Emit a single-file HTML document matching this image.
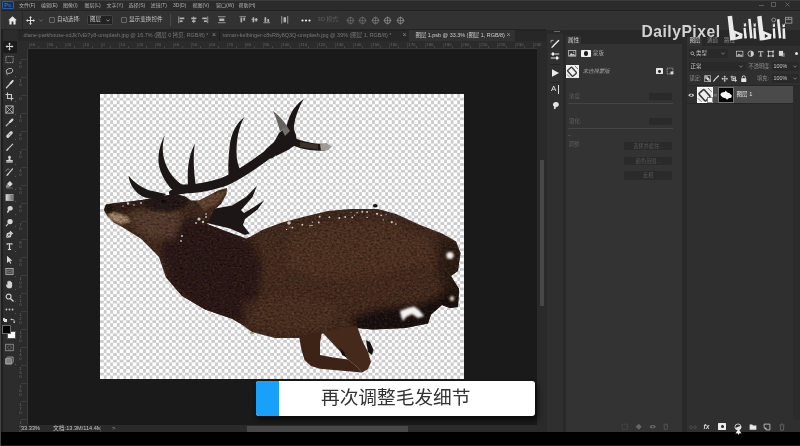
<!DOCTYPE html><html><head><meta charset="utf-8"><title>Photoshop</title><style>html,body{margin:0;padding:0;background:#1a1a1a;}body{width:800px;height:446px;position:relative;overflow:hidden;font-family:"Liberation Sans","Noto Sans CJK SC",sans-serif;}#wrap{position:absolute;left:-6px;top:-6px;width:812px;height:458px;background:#1a1a1a;filter:blur(0.5px);will-change:transform;}#in{position:absolute;left:6px;top:6px;width:800px;height:446px;}.t{display:block;white-space:nowrap;font-family:"Liberation Sans","Noto Sans CJK SC",sans-serif;}</style></head><body><div id="wrap"><div id="in"><div style="position:absolute;left:0px;top:0px;width:800px;height:446px;background:#1a1a1a;"></div><div style="position:absolute;left:0px;top:0px;width:800px;height:10px;background:#2b2b2b;"></div><div style="position:absolute;left:0px;top:0px;width:800px;height:1px;background:#3c3c3c;"></div><div style="position:absolute;left:0px;top:9.5px;width:800px;height:1.5px;background:#232323;"></div><div style="position:absolute;left:0px;top:11px;width:800px;height:19px;background:#323232;"></div><div style="position:absolute;left:0px;top:30px;width:546px;height:11px;background:#272727;"></div><div style="position:absolute;left:0px;top:29.4px;width:546px;height:1.3px;background:#232323;"></div><div style="position:absolute;left:409px;top:30px;width:105.5px;height:11px;background:#323232;"></div><div style="position:absolute;left:18px;top:41px;width:528px;height:7.5px;background:#2b2b2b;"></div><div style="position:absolute;left:18px;top:41px;width:9.5px;height:384px;background:#2b2b2b;"></div><div style="position:absolute;left:0px;top:30px;width:18px;height:402px;background:#2c2c2c;"></div><div style="position:absolute;left:1px;top:30px;width:1.6px;height:402px;background:#1f1f1f;"></div><div style="position:absolute;left:537px;top:48.5px;width:9px;height:377px;background:#2a2a2a;"></div><div style="position:absolute;left:539.8px;top:160px;width:4.6px;height:146px;background:#474747;"></div><div style="position:absolute;left:18px;top:425px;width:528px;height:7px;background:#2a2a2a;"></div><div style="position:absolute;left:246.5px;top:426.2px;width:161.5px;height:5.8px;background:#474747;"></div><div style="position:absolute;left:546px;top:30px;width:254px;height:402px;background:#292929;"></div><div style="position:absolute;left:546.5px;top:33.5px;width:16px;height:398.5px;background:#2f2f2f;"></div><div style="position:absolute;left:565.5px;top:30px;width:116px;height:402px;background:#333333;"></div><div style="position:absolute;left:565.5px;top:30px;width:116px;height:14px;background:#282828;"></div><div style="position:absolute;left:566px;top:36px;width:15px;height:8.5px;background:#333333;"></div><div style="position:absolute;left:686.5px;top:30px;width:113.5px;height:402px;background:#2f2f2f;"></div><div style="position:absolute;left:0px;top:432px;width:800px;height:14px;background:#000;"></div><div style="position:absolute;left:0px;top:445.2px;width:800px;height:0.8px;background:#1c1c1c;"></div><div style="position:absolute;left:0px;top:0px;width:1px;height:446px;background:#454545;"></div><div style="position:absolute;left:2px;top:0.6px;width:12px;height:8.4px;background:#12305c;border:0.9px solid #2b5c9c;box-sizing:border-box;border-radius:1px;"></div><div style="position:absolute;left:4.2px;top:1.9px;font-size:5.6px;line-height:6px;font-weight:bold;color:#3a6fae;">Ps</div><div style="position:absolute;left:19px;top:2.6px;line-height:0;color:#b0b0b0"><span class="t" style="font-size:5px;line-height:5px;">文件(F)</span></div><div style="position:absolute;left:41px;top:2.6px;line-height:0;color:#b0b0b0"><span class="t" style="font-size:5px;line-height:5px;">编辑(E)</span></div><div style="position:absolute;left:63px;top:2.6px;line-height:0;color:#b0b0b0"><span class="t" style="font-size:5px;line-height:5px;">图像(I)</span></div><div style="position:absolute;left:84.5px;top:2.6px;line-height:0;color:#b0b0b0"><span class="t" style="font-size:5px;line-height:5px;">图层(L)</span></div><div style="position:absolute;left:106.5px;top:2.6px;line-height:0;color:#b0b0b0"><span class="t" style="font-size:5px;line-height:5px;">文字(Y)</span></div><div style="position:absolute;left:128.5px;top:2.6px;line-height:0;color:#b0b0b0"><span class="t" style="font-size:5px;line-height:5px;">选择(S)</span></div><div style="position:absolute;left:150.5px;top:2.6px;line-height:0;color:#b0b0b0"><span class="t" style="font-size:5px;line-height:5px;">滤镜(T)</span></div><div style="position:absolute;left:173px;top:2.6px;line-height:0;color:#b0b0b0"><span class="t" style="font-size:5px;line-height:5px;">3D(D)</span></div><div style="position:absolute;left:192.5px;top:2.6px;line-height:0;color:#b0b0b0"><span class="t" style="font-size:5px;line-height:5px;">视图(V)</span></div><div style="position:absolute;left:216px;top:2.6px;line-height:0;color:#b0b0b0"><span class="t" style="font-size:5px;line-height:5px;">窗口(W)</span></div><div style="position:absolute;left:238.5px;top:2.6px;line-height:0;color:#b0b0b0"><span class="t" style="font-size:5px;line-height:5px;">帮助(H)</span></div><svg style="position:absolute;left:7.5px;top:15.5px" width="9" height="9" viewBox="0 0 9 9"><path fill="#e8e8e8" d="M4.5,0.3 L8.8,4.3 L7.6,4.3 L7.6,8.6 L5.4,8.6 L5.4,5.6 L3.6,5.6 L3.6,8.6 L1.4,8.6 L1.4,4.3 L0.2,4.3 Z"/></svg><div style="position:absolute;left:21.5px;top:12px;width:0.8px;height:17px;background:#262626;"></div><svg style="position:absolute;left:25.5px;top:15.5px" width="9" height="9" viewBox="0 0 9 9"><path fill="#dcdcdc" d="M4.5,0 L6,1.8 L5,1.8 L5,4 L7.2,4 L7.2,3 L9,4.5 L7.2,6 L7.2,5 L5,5 L5,7.2 L6,7.2 L4.5,9 L3,7.2 L4,7.2 L4,5 L1.8,5 L1.8,6 L0,4.5 L1.8,3 L1.8,4 L4,4 L4,1.8 L3,1.8 Z"/></svg><svg style="position:absolute;left:38.5px;top:19px" width="4" height="3" viewBox="0 0 4 3"><path fill="none" stroke="#777" stroke-width="0.8" d="M0.3,0.5 L2,2.3 L3.7,0.5"/></svg><div style="position:absolute;left:49px;top:17px;width:5.5px;height:5.5px;background:transparent;border:0.7px solid #6a6a6a;border-radius:1px;box-sizing:border-box;"></div><div style="position:absolute;left:57px;top:16.9px;line-height:0;color:#c4c4c4"><span class="t" style="font-size:5.5px;line-height:5.5px;">自动选择:</span></div><div style="position:absolute;left:87px;top:14.5px;width:25.5px;height:10.5px;background:#222;border:0.6px solid #444;border-radius:1.5px;box-sizing:border-box;"></div><div style="position:absolute;left:90px;top:16.9px;line-height:0;color:#d0d0d0"><span class="t" style="font-size:5.5px;line-height:5.5px;">图层</span></div><svg style="position:absolute;left:106px;top:18.5px" width="4" height="3" viewBox="0 0 4 3"><path fill="none" stroke="#aaa" stroke-width="0.8" d="M0.3,0.5 L2,2.3 L3.7,0.5"/></svg><div style="position:absolute;left:121px;top:17px;width:5.5px;height:5.5px;background:transparent;border:0.7px solid #6a6a6a;border-radius:1px;box-sizing:border-box;"></div><div style="position:absolute;left:129px;top:16.9px;line-height:0;color:#c4c4c4"><span class="t" style="font-size:5.6px;line-height:5.6px;">显示变换控件</span></div><div style="position:absolute;left:169.5px;top:14px;width:0.7px;height:12px;background:#484848;"></div><svg style="position:absolute;left:178.2px;top:16.3px" width="7.6" height="7.6" viewBox="0 0 9 9" fill="#b4b4b4"><rect x="0.5" y="0.5" width="0.9" height="8"/><rect x="2" y="1.8" width="5.5" height="2"/><rect x="2" y="5.2" width="3.5" height="2"/></svg><svg style="position:absolute;left:189.7px;top:16.3px" width="7.6" height="7.6" viewBox="0 0 9 9" fill="#b4b4b4"><rect x="4" y="0.5" width="0.9" height="8"/><rect x="1.5" y="1.8" width="6" height="2"/><rect x="2.5" y="5.2" width="4" height="2"/></svg><svg style="position:absolute;left:201.2px;top:16.3px" width="7.6" height="7.6" viewBox="0 0 9 9" fill="#b4b4b4"><rect x="7.6" y="0.5" width="0.9" height="8"/><rect x="1.5" y="1.8" width="5.5" height="2"/><rect x="3.5" y="5.2" width="3.5" height="2"/></svg><svg style="position:absolute;left:218.2px;top:16.3px" width="7.6" height="7.6" viewBox="0 0 9 9" fill="#b4b4b4"><rect x="0" y="0.5" width="9" height="0.9"/><rect x="0" y="7.6" width="9" height="0.9"/><rect x="1.5" y="3" width="6" height="3"/></svg><svg style="position:absolute;left:238.7px;top:16.3px" width="7.6" height="7.6" viewBox="0 0 9 9" fill="#b4b4b4"><rect x="0.5" y="0.5" width="8" height="0.9"/><rect x="1.8" y="2" width="2" height="5.5"/><rect x="5.2" y="2" width="2" height="3.5"/></svg><svg style="position:absolute;left:250.7px;top:16.3px" width="7.6" height="7.6" viewBox="0 0 9 9" fill="#b4b4b4"><rect x="0.5" y="4" width="8" height="0.9"/><rect x="1.8" y="1.5" width="2" height="6"/><rect x="5.2" y="2.5" width="2" height="4"/></svg><svg style="position:absolute;left:263.2px;top:16.3px" width="7.6" height="7.6" viewBox="0 0 9 9" fill="#b4b4b4"><rect x="0.5" y="7.6" width="8" height="0.9"/><rect x="1.8" y="1.5" width="2" height="5.5"/><rect x="5.2" y="3.5" width="2" height="3.5"/></svg><svg style="position:absolute;left:281.2px;top:16.3px" width="7.6" height="7.6" viewBox="0 0 9 9" fill="#b4b4b4"><rect x="0.5" y="0" width="0.9" height="9"/><rect x="7.6" y="0" width="0.9" height="9"/><rect x="3" y="1.5" width="3" height="6"/></svg><svg style="position:absolute;left:300.5px;top:18.5px" width="10" height="3" viewBox="0 0 10 3" fill="#f0f0f0"><circle cx="1.5" cy="1.5" r="1.1"/><circle cx="5" cy="1.5" r="1.1"/><circle cx="8.5" cy="1.5" r="1.1"/></svg><div style="position:absolute;left:317.5px;top:16.6px;line-height:0;color:#5e5e5e"><span class="t" style="font-size:5.8px;line-height:5.8px;">3D 模式:</span></div><svg style="position:absolute;left:345.5px;top:15.5px" width="9" height="9" viewBox="0 0 9 9" fill="none" stroke="#686868" stroke-width="1"><circle cx="4.5" cy="4.5" r="3"/><path d="M4.5,0.5 V8.5 M0.5,4.5 H8.5" stroke-width="0.7"/></svg><svg style="position:absolute;left:358px;top:15.5px" width="9" height="9" viewBox="0 0 9 9" fill="none" stroke="#686868" stroke-width="1"><circle cx="4.5" cy="4.5" r="3"/><path d="M4.5,0.5 V8.5 M0.5,4.5 H8.5" stroke-width="0.7"/></svg><svg style="position:absolute;left:370.5px;top:15.5px" width="9" height="9" viewBox="0 0 9 9" fill="none" stroke="#7a7a7a" stroke-width="1"><circle cx="4.5" cy="4.5" r="3"/><path d="M4.5,0.5 V8.5 M0.5,4.5 H8.5" stroke-width="0.7"/></svg><svg style="position:absolute;left:383px;top:15.5px" width="9" height="9" viewBox="0 0 9 9" fill="none" stroke="#8a8a8a" stroke-width="1"><circle cx="4.5" cy="4.5" r="3"/><path d="M4.5,0.5 V8.5 M0.5,4.5 H8.5" stroke-width="0.7"/></svg><svg style="position:absolute;left:395.5px;top:15.5px" width="9" height="9" viewBox="0 0 9 9" fill="none" stroke="#8a8a8a" stroke-width="1"><circle cx="4.5" cy="4.5" r="3"/><path d="M4.5,0.5 V8.5 M0.5,4.5 H8.5" stroke-width="0.7"/></svg><div style="position:absolute;left:23.5px;top:31.8px;font-size:5.45px;line-height:6.54px;color:#787878;white-space:nowrap;">diane-parkhouse-xdJk7vEi7y8-unsplash.jpg @ 16.7% (<span style="font-size:5.4px;">图层</span> 0 <span style="font-size:5.4px;">拷贝</span>, RGB/8) *</div><div style="position:absolute;left:212px;top:31.2px;font-size:7px;line-height:8.4px;color:#8a8a8a;white-space:nowrap;">×</div><div style="position:absolute;left:219.3px;top:31px;width:0.7px;height:10px;background:#1c1c1c;"></div><div style="position:absolute;left:222.5px;top:31.8px;font-size:5.45px;line-height:6.54px;color:#787878;white-space:nowrap;">roman-kelbinger-c8sR8y8Q3Q-unsplash.jpg @ 39% (<span style="font-size:5.4px;">图层</span> 1, RGB/8) *</div><div style="position:absolute;left:402.5px;top:31.2px;font-size:7px;line-height:8.4px;color:#8a8a8a;white-space:nowrap;">×</div><div style="position:absolute;left:415.5px;top:31.8px;font-size:5.45px;line-height:6.54px;color:#d0d0d0;white-space:nowrap;"><span style="font-size:5.4px;">图层</span> 1.psb @ 33.3% (<span style="font-size:5.4px;">图层</span> 1, RGB/8)</div><div style="position:absolute;left:506.5px;top:31.2px;font-size:7px;line-height:8.4px;color:#9a9a9a;white-space:nowrap;">×</div><div style="position:absolute;left:29px;top:42.5px;width:0.6px;height:6px;background:#3c3c3c;"></div><div style="position:absolute;left:30.2px;top:41.6px;font-size:4.4px;line-height:5.28px;color:#666;white-space:nowrap;">40</div><div style="position:absolute;left:47px;top:42.5px;width:0.6px;height:6px;background:#3c3c3c;"></div><div style="position:absolute;left:48.2px;top:41.6px;font-size:4.4px;line-height:5.28px;color:#666;white-space:nowrap;">30</div><div style="position:absolute;left:65px;top:42.5px;width:0.6px;height:6px;background:#3c3c3c;"></div><div style="position:absolute;left:66.2px;top:41.6px;font-size:4.4px;line-height:5.28px;color:#666;white-space:nowrap;">20</div><div style="position:absolute;left:83px;top:42.5px;width:0.6px;height:6px;background:#3c3c3c;"></div><div style="position:absolute;left:84.2px;top:41.6px;font-size:4.4px;line-height:5.28px;color:#666;white-space:nowrap;">10</div><div style="position:absolute;left:101px;top:42.5px;width:0.6px;height:6px;background:#3c3c3c;"></div><div style="position:absolute;left:102.2px;top:41.6px;font-size:4.4px;line-height:5.28px;color:#666;white-space:nowrap;">0</div><div style="position:absolute;left:119px;top:42.5px;width:0.6px;height:6px;background:#3c3c3c;"></div><div style="position:absolute;left:120.2px;top:41.6px;font-size:4.4px;line-height:5.28px;color:#666;white-space:nowrap;">10</div><div style="position:absolute;left:137px;top:42.5px;width:0.6px;height:6px;background:#3c3c3c;"></div><div style="position:absolute;left:138.2px;top:41.6px;font-size:4.4px;line-height:5.28px;color:#666;white-space:nowrap;">20</div><div style="position:absolute;left:155px;top:42.5px;width:0.6px;height:6px;background:#3c3c3c;"></div><div style="position:absolute;left:156.2px;top:41.6px;font-size:4.4px;line-height:5.28px;color:#666;white-space:nowrap;">30</div><div style="position:absolute;left:173px;top:42.5px;width:0.6px;height:6px;background:#3c3c3c;"></div><div style="position:absolute;left:174.2px;top:41.6px;font-size:4.4px;line-height:5.28px;color:#666;white-space:nowrap;">40</div><div style="position:absolute;left:191px;top:42.5px;width:0.6px;height:6px;background:#3c3c3c;"></div><div style="position:absolute;left:192.2px;top:41.6px;font-size:4.4px;line-height:5.28px;color:#666;white-space:nowrap;">50</div><div style="position:absolute;left:209px;top:42.5px;width:0.6px;height:6px;background:#3c3c3c;"></div><div style="position:absolute;left:210.2px;top:41.6px;font-size:4.4px;line-height:5.28px;color:#666;white-space:nowrap;">60</div><div style="position:absolute;left:227px;top:42.5px;width:0.6px;height:6px;background:#3c3c3c;"></div><div style="position:absolute;left:228.2px;top:41.6px;font-size:4.4px;line-height:5.28px;color:#666;white-space:nowrap;">70</div><div style="position:absolute;left:245px;top:42.5px;width:0.6px;height:6px;background:#3c3c3c;"></div><div style="position:absolute;left:246.2px;top:41.6px;font-size:4.4px;line-height:5.28px;color:#666;white-space:nowrap;">80</div><div style="position:absolute;left:263px;top:42.5px;width:0.6px;height:6px;background:#3c3c3c;"></div><div style="position:absolute;left:264.2px;top:41.6px;font-size:4.4px;line-height:5.28px;color:#666;white-space:nowrap;">90</div><div style="position:absolute;left:281px;top:42.5px;width:0.6px;height:6px;background:#3c3c3c;"></div><div style="position:absolute;left:282.2px;top:41.6px;font-size:4.4px;line-height:5.28px;color:#666;white-space:nowrap;">100</div><div style="position:absolute;left:299px;top:42.5px;width:0.6px;height:6px;background:#3c3c3c;"></div><div style="position:absolute;left:300.2px;top:41.6px;font-size:4.4px;line-height:5.28px;color:#666;white-space:nowrap;">110</div><div style="position:absolute;left:317px;top:42.5px;width:0.6px;height:6px;background:#3c3c3c;"></div><div style="position:absolute;left:318.2px;top:41.6px;font-size:4.4px;line-height:5.28px;color:#666;white-space:nowrap;">120</div><div style="position:absolute;left:335px;top:42.5px;width:0.6px;height:6px;background:#3c3c3c;"></div><div style="position:absolute;left:336.2px;top:41.6px;font-size:4.4px;line-height:5.28px;color:#666;white-space:nowrap;">130</div><div style="position:absolute;left:353px;top:42.5px;width:0.6px;height:6px;background:#3c3c3c;"></div><div style="position:absolute;left:354.2px;top:41.6px;font-size:4.4px;line-height:5.28px;color:#666;white-space:nowrap;">140</div><div style="position:absolute;left:371px;top:42.5px;width:0.6px;height:6px;background:#3c3c3c;"></div><div style="position:absolute;left:372.2px;top:41.6px;font-size:4.4px;line-height:5.28px;color:#666;white-space:nowrap;">150</div><div style="position:absolute;left:389px;top:42.5px;width:0.6px;height:6px;background:#3c3c3c;"></div><div style="position:absolute;left:390.2px;top:41.6px;font-size:4.4px;line-height:5.28px;color:#666;white-space:nowrap;">160</div><div style="position:absolute;left:407px;top:42.5px;width:0.6px;height:6px;background:#3c3c3c;"></div><div style="position:absolute;left:408.2px;top:41.6px;font-size:4.4px;line-height:5.28px;color:#666;white-space:nowrap;">170</div><div style="position:absolute;left:425px;top:42.5px;width:0.6px;height:6px;background:#3c3c3c;"></div><div style="position:absolute;left:426.2px;top:41.6px;font-size:4.4px;line-height:5.28px;color:#666;white-space:nowrap;">180</div><div style="position:absolute;left:443px;top:42.5px;width:0.6px;height:6px;background:#3c3c3c;"></div><div style="position:absolute;left:444.2px;top:41.6px;font-size:4.4px;line-height:5.28px;color:#666;white-space:nowrap;">190</div><div style="position:absolute;left:461px;top:42.5px;width:0.6px;height:6px;background:#3c3c3c;"></div><div style="position:absolute;left:462.2px;top:41.6px;font-size:4.4px;line-height:5.28px;color:#666;white-space:nowrap;">200</div><div style="position:absolute;left:479px;top:42.5px;width:0.6px;height:6px;background:#3c3c3c;"></div><div style="position:absolute;left:480.2px;top:41.6px;font-size:4.4px;line-height:5.28px;color:#666;white-space:nowrap;">210</div><div style="position:absolute;left:497px;top:42.5px;width:0.6px;height:6px;background:#3c3c3c;"></div><div style="position:absolute;left:498.2px;top:41.6px;font-size:4.4px;line-height:5.28px;color:#666;white-space:nowrap;">220</div><div style="position:absolute;left:515px;top:42.5px;width:0.6px;height:6px;background:#3c3c3c;"></div><div style="position:absolute;left:516.2px;top:41.6px;font-size:4.4px;line-height:5.28px;color:#666;white-space:nowrap;">230</div><div style="position:absolute;left:533px;top:42.5px;width:0.6px;height:6px;background:#3c3c3c;"></div><div style="position:absolute;left:534.2px;top:41.6px;font-size:4.4px;line-height:5.28px;color:#666;white-space:nowrap;">240</div><div style="position:absolute;left:38px;top:45.5px;width:0.5px;height:3px;background:#444;"></div><div style="position:absolute;left:56px;top:45.5px;width:0.5px;height:3px;background:#444;"></div><div style="position:absolute;left:74px;top:45.5px;width:0.5px;height:3px;background:#444;"></div><div style="position:absolute;left:92px;top:45.5px;width:0.5px;height:3px;background:#444;"></div><div style="position:absolute;left:110px;top:45.5px;width:0.5px;height:3px;background:#444;"></div><div style="position:absolute;left:128px;top:45.5px;width:0.5px;height:3px;background:#444;"></div><div style="position:absolute;left:146px;top:45.5px;width:0.5px;height:3px;background:#444;"></div><div style="position:absolute;left:164px;top:45.5px;width:0.5px;height:3px;background:#444;"></div><div style="position:absolute;left:182px;top:45.5px;width:0.5px;height:3px;background:#444;"></div><div style="position:absolute;left:200px;top:45.5px;width:0.5px;height:3px;background:#444;"></div><div style="position:absolute;left:218px;top:45.5px;width:0.5px;height:3px;background:#444;"></div><div style="position:absolute;left:236px;top:45.5px;width:0.5px;height:3px;background:#444;"></div><div style="position:absolute;left:254px;top:45.5px;width:0.5px;height:3px;background:#444;"></div><div style="position:absolute;left:272px;top:45.5px;width:0.5px;height:3px;background:#444;"></div><div style="position:absolute;left:290px;top:45.5px;width:0.5px;height:3px;background:#444;"></div><div style="position:absolute;left:308px;top:45.5px;width:0.5px;height:3px;background:#444;"></div><div style="position:absolute;left:326px;top:45.5px;width:0.5px;height:3px;background:#444;"></div><div style="position:absolute;left:344px;top:45.5px;width:0.5px;height:3px;background:#444;"></div><div style="position:absolute;left:362px;top:45.5px;width:0.5px;height:3px;background:#444;"></div><div style="position:absolute;left:380px;top:45.5px;width:0.5px;height:3px;background:#444;"></div><div style="position:absolute;left:398px;top:45.5px;width:0.5px;height:3px;background:#444;"></div><div style="position:absolute;left:416px;top:45.5px;width:0.5px;height:3px;background:#444;"></div><div style="position:absolute;left:434px;top:45.5px;width:0.5px;height:3px;background:#444;"></div><div style="position:absolute;left:452px;top:45.5px;width:0.5px;height:3px;background:#444;"></div><div style="position:absolute;left:470px;top:45.5px;width:0.5px;height:3px;background:#444;"></div><div style="position:absolute;left:488px;top:45.5px;width:0.5px;height:3px;background:#444;"></div><div style="position:absolute;left:506px;top:45.5px;width:0.5px;height:3px;background:#444;"></div><div style="position:absolute;left:524px;top:45.5px;width:0.5px;height:3px;background:#444;"></div><div style="position:absolute;left:21px;top:59px;width:6.5px;height:0.6px;background:#3c3c3c;"></div><div style="position:absolute;left:19.3px;top:60.5px;font-size:4.2px;line-height:4px;color:#6e6e6e;width:4px;word-break:break-all;">2<br>0</div><div style="position:absolute;left:21px;top:77px;width:6.5px;height:0.6px;background:#3c3c3c;"></div><div style="position:absolute;left:19.3px;top:78.5px;font-size:4.2px;line-height:4px;color:#6e6e6e;width:4px;word-break:break-all;">1<br>0</div><div style="position:absolute;left:21px;top:95px;width:6.5px;height:0.6px;background:#3c3c3c;"></div><div style="position:absolute;left:19.3px;top:96.5px;font-size:4.2px;line-height:4px;color:#6e6e6e;width:4px;word-break:break-all;">0</div><div style="position:absolute;left:21px;top:113px;width:6.5px;height:0.6px;background:#3c3c3c;"></div><div style="position:absolute;left:19.3px;top:114.5px;font-size:4.2px;line-height:4px;color:#6e6e6e;width:4px;word-break:break-all;">1<br>0</div><div style="position:absolute;left:21px;top:131px;width:6.5px;height:0.6px;background:#3c3c3c;"></div><div style="position:absolute;left:19.3px;top:132.5px;font-size:4.2px;line-height:4px;color:#6e6e6e;width:4px;word-break:break-all;">2<br>0</div><div style="position:absolute;left:21px;top:149px;width:6.5px;height:0.6px;background:#3c3c3c;"></div><div style="position:absolute;left:19.3px;top:150.5px;font-size:4.2px;line-height:4px;color:#6e6e6e;width:4px;word-break:break-all;">3<br>0</div><div style="position:absolute;left:21px;top:167px;width:6.5px;height:0.6px;background:#3c3c3c;"></div><div style="position:absolute;left:19.3px;top:168.5px;font-size:4.2px;line-height:4px;color:#6e6e6e;width:4px;word-break:break-all;">4<br>0</div><div style="position:absolute;left:21px;top:185px;width:6.5px;height:0.6px;background:#3c3c3c;"></div><div style="position:absolute;left:19.3px;top:186.5px;font-size:4.2px;line-height:4px;color:#6e6e6e;width:4px;word-break:break-all;">5<br>0</div><div style="position:absolute;left:21px;top:203px;width:6.5px;height:0.6px;background:#3c3c3c;"></div><div style="position:absolute;left:19.3px;top:204.5px;font-size:4.2px;line-height:4px;color:#6e6e6e;width:4px;word-break:break-all;">6<br>0</div><div style="position:absolute;left:21px;top:221px;width:6.5px;height:0.6px;background:#3c3c3c;"></div><div style="position:absolute;left:19.3px;top:222.5px;font-size:4.2px;line-height:4px;color:#6e6e6e;width:4px;word-break:break-all;">7<br>0</div><div style="position:absolute;left:21px;top:239px;width:6.5px;height:0.6px;background:#3c3c3c;"></div><div style="position:absolute;left:19.3px;top:240.5px;font-size:4.2px;line-height:4px;color:#6e6e6e;width:4px;word-break:break-all;">8<br>0</div><div style="position:absolute;left:21px;top:257px;width:6.5px;height:0.6px;background:#3c3c3c;"></div><div style="position:absolute;left:19.3px;top:258.5px;font-size:4.2px;line-height:4px;color:#6e6e6e;width:4px;word-break:break-all;">9<br>0</div><div style="position:absolute;left:21px;top:275px;width:6.5px;height:0.6px;background:#3c3c3c;"></div><div style="position:absolute;left:19.3px;top:276.5px;font-size:4.2px;line-height:4px;color:#6e6e6e;width:4px;word-break:break-all;">1<br>0<br>0</div><div style="position:absolute;left:21px;top:293px;width:6.5px;height:0.6px;background:#3c3c3c;"></div><div style="position:absolute;left:19.3px;top:294.5px;font-size:4.2px;line-height:4px;color:#6e6e6e;width:4px;word-break:break-all;">1<br>1<br>0</div><div style="position:absolute;left:21px;top:311px;width:6.5px;height:0.6px;background:#3c3c3c;"></div><div style="position:absolute;left:19.3px;top:312.5px;font-size:4.2px;line-height:4px;color:#6e6e6e;width:4px;word-break:break-all;">1<br>2<br>0</div><div style="position:absolute;left:21px;top:329px;width:6.5px;height:0.6px;background:#3c3c3c;"></div><div style="position:absolute;left:19.3px;top:330.5px;font-size:4.2px;line-height:4px;color:#6e6e6e;width:4px;word-break:break-all;">1<br>3<br>0</div><div style="position:absolute;left:21px;top:347px;width:6.5px;height:0.6px;background:#3c3c3c;"></div><div style="position:absolute;left:19.3px;top:348.5px;font-size:4.2px;line-height:4px;color:#6e6e6e;width:4px;word-break:break-all;">1<br>4<br>0</div><div style="position:absolute;left:21px;top:365px;width:6.5px;height:0.6px;background:#3c3c3c;"></div><div style="position:absolute;left:19.3px;top:366.5px;font-size:4.2px;line-height:4px;color:#6e6e6e;width:4px;word-break:break-all;">1<br>5<br>0</div><div style="position:absolute;left:21px;top:383px;width:6.5px;height:0.6px;background:#3c3c3c;"></div><div style="position:absolute;left:19.3px;top:384.5px;font-size:4.2px;line-height:4px;color:#6e6e6e;width:4px;word-break:break-all;">1<br>6<br>0</div><div style="position:absolute;left:21px;top:401px;width:6.5px;height:0.6px;background:#3c3c3c;"></div><div style="position:absolute;left:19.3px;top:402.5px;font-size:4.2px;line-height:4px;color:#6e6e6e;width:4px;word-break:break-all;">1<br>7<br>0</div><div style="position:absolute;left:21px;top:419px;width:6.5px;height:0.6px;background:#3c3c3c;"></div><div style="position:absolute;left:19.3px;top:420.5px;font-size:4.2px;line-height:4px;color:#6e6e6e;width:4px;word-break:break-all;">1<br>8<br>0</div><div style="position:absolute;left:26.8px;top:48.5px;width:0.7px;height:376.5px;background:#3a3a3a;"></div><div style="position:absolute;left:27.5px;top:47.8px;width:509.5px;height:0.7px;background:#3a3a3a;"></div><div style="position:absolute;left:21px;top:425.1px;font-size:5.6px;line-height:6.72px;color:#cfcfcf;white-space:nowrap;">33.33%</div><div style="position:absolute;left:53px;top:425.1px;font-size:5.6px;line-height:6.72px;color:#c4c4c4;white-space:nowrap;"><span style="font-size:5.8px;">文档</span>:13.3M/114.4M</div><div style="position:absolute;left:112px;top:425.2px;font-size:6px;line-height:7.2px;color:#999;white-space:nowrap;">&gt;</div><div style="position:absolute;left:100px;top:426px;width:0.6px;height:5.5px;background:#444;"></div><div style="position:absolute;left:2.5px;top:41px;width:14px;height:11.5px;background:#1b1b1b;border-radius:1px;"></div><svg style="position:absolute;left:5px;top:42.2px;opacity:0.88" width="9" height="9" viewBox="0 0 10 10"><path fill="#f0f0f0" d="M5,0.6 L6.6,2.6 L5.5,2.6 L5.5,4.5 L7.4,4.5 L7.4,3.4 L9.4,5 L7.4,6.6 L7.4,5.5 L5.5,5.5 L5.5,7.4 L6.6,7.4 L5,9.4 L3.4,7.4 L4.5,7.4 L4.5,5.5 L2.6,5.5 L2.6,6.6 L0.6,5 L2.6,3.4 L2.6,4.5 L4.5,4.5 L4.5,2.6 L3.4,2.6 Z"/></svg><svg style="position:absolute;left:5px;top:54.7px;opacity:0.88" width="9" height="9" viewBox="0 0 10 10"><rect x="1" y="1.5" width="8" height="7" fill="none" stroke="#c4c4c4" stroke-width="0.9" stroke-dasharray="1.6 0.9"/></svg><svg style="position:absolute;left:5px;top:67.1px;opacity:0.88" width="9" height="9" viewBox="0 0 10 10"><ellipse cx="5.2" cy="4.4" rx="3.8" ry="2.7" fill="none" stroke="#c8c8c8" stroke-width="1" transform="rotate(-18 5 5)"/><path d="M2.2,6.2 C1.4,7.2 1.8,8.4 3,8.8" fill="none" stroke="#c8c8c8" stroke-width="0.9"/></svg><svg style="position:absolute;left:5px;top:79.7px;opacity:0.88" width="9" height="9" viewBox="0 0 10 10"><path d="M1.6,8.6 L6.6,3.2" stroke="#e4e4e4" stroke-width="1.5" stroke-linecap="round"/><path d="M6.2,3.6 L8.6,1" stroke="#f4f4f4" stroke-width="2.1" stroke-linecap="round"/></svg><svg style="position:absolute;left:5px;top:92.1px;opacity:0.88" width="9" height="9" viewBox="0 0 10 10"><path d="M2.8,0.6 V7.2 H9.4 M0.6,2.8 H7.2 V9.4" fill="none" stroke="#dedede" stroke-width="1.25"/></svg><svg style="position:absolute;left:5px;top:105.1px;opacity:0.88" width="9" height="9" viewBox="0 0 10 10"><rect x="1" y="1" width="8" height="8" fill="none" stroke="#d4d4d4" stroke-width="1"/><path d="M1,1 L9,9 M9,1 L1,9" stroke="#d4d4d4" stroke-width="0.9"/></svg><svg style="position:absolute;left:5px;top:117.5px;opacity:0.88" width="9" height="9" viewBox="0 0 10 10"><path d="M1.4,8.6 L5.4,4.6" stroke="#c8c8c8" stroke-width="1.5" stroke-linecap="round"/><path d="M5.6,4.4 L8.2,1.8" stroke="#f4f4f4" stroke-width="2.4" stroke-linecap="round"/></svg><svg style="position:absolute;left:5px;top:130.1px;opacity:0.88" width="9" height="9" viewBox="0 0 10 10"><rect x="0.6" y="3.2" width="8.8" height="3.6" rx="1.6" fill="#e8e8e8" transform="rotate(-45 5 5)"/><path d="M4.1,4.1 L5.9,5.9 M5.9,4.1 L4.1,5.9" stroke="#555" stroke-width="0.6"/></svg><svg style="position:absolute;left:5px;top:142.7px;opacity:0.88" width="9" height="9" viewBox="0 0 10 10"><path d="M8.6,1.2 L3.6,6.2" stroke="#e6e6e6" stroke-width="1.3" stroke-linecap="round"/><path d="M3.2,6.2 C2.2,6.4 1.6,7.4 1.2,8.8 C2.6,8.6 3.6,8 3.9,6.9 Z" fill="#f4f4f4"/></svg><svg style="position:absolute;left:5px;top:155.1px;opacity:0.88" width="9" height="9" viewBox="0 0 10 10"><circle cx="5" cy="2.4" r="1.5" fill="#e8e8e8"/><path d="M4.2,3.4 H5.8 L6.2,5.6 H8.6 V7.4 H1.4 V5.6 H3.8 Z" fill="#e8e8e8"/><rect x="1.4" y="8" width="7.2" height="0.9" fill="#bdbdbd"/></svg><svg style="position:absolute;left:5px;top:167.5px;opacity:0.88" width="9" height="9" viewBox="0 0 10 10"><path d="M8.4,1 L3.8,6.2" stroke="#e6e6e6" stroke-width="1.3" stroke-linecap="round"/><path d="M3.4,6.2 C2.4,6.4 1.8,7.4 1.4,8.8 C2.8,8.6 3.8,8 4.1,6.9 Z" fill="#f4f4f4"/><path d="M1,3.6 A2.6,2.6 0 0 1 5,1.6" fill="none" stroke="#bcbcbc" stroke-width="0.8"/></svg><svg style="position:absolute;left:5px;top:180.1px;opacity:0.88" width="9" height="9" viewBox="0 0 10 10"><path d="M5.4,1.2 L8.6,4.4 L5.4,7.6 L2.2,4.4 Z" fill="#f0f0f0"/><path d="M2.2,4.4 L5.4,7.6 L4.4,8.6 H1.8 L0.8,7.2 Z" fill="#9a9a9a"/><rect x="1" y="8.6" width="8" height="0.7" fill="#8a8a8a"/></svg><svg style="position:absolute;left:5px;top:192.5px;opacity:0.88" width="9" height="9" viewBox="0 0 10 10"><defs><linearGradient id="tg" x1="0" x2="1"><stop offset="0" stop-color="#f4f4f4"/><stop offset="1" stop-color="#6a6a6a"/></linearGradient></defs><rect x="1" y="1.4" width="8" height="7.2" fill="url(#tg)" stroke="#d0d0d0" stroke-width="0.6"/></svg><svg style="position:absolute;left:5px;top:205.1px;opacity:0.88" width="9" height="9" viewBox="0 0 10 10"><path d="M5.8,1 C8,1 9,2.6 8.6,4.4 C8.2,6 6.4,6.4 5,6.2 L3.4,8.8 L2,8 L3.4,5.4 C2.6,4.6 2.6,3 3.4,2 C4,1.3 4.8,1 5.8,1 Z" fill="#ececec"/></svg><svg style="position:absolute;left:5px;top:217.5px;opacity:0.88" width="9" height="9" viewBox="0 0 10 10"><circle cx="5.6" cy="4" r="2.9" fill="#f0f0f0"/><path d="M3.6,6.2 L1.4,8.8" stroke="#dcdcdc" stroke-width="1.3" stroke-linecap="round"/></svg><svg style="position:absolute;left:5px;top:229.7px;opacity:0.88" width="9" height="9" viewBox="0 0 10 10"><path d="M6,0.8 L9.2,4 L7.4,5 L6.4,8 L1,9 L2,3.6 L5,2.6 Z" fill="#e4e4e4"/><circle cx="4.6" cy="5.4" r="0.9" fill="#333"/><path d="M1.2,8.8 L4.2,5.8" stroke="#333" stroke-width="0.6"/></svg><svg style="position:absolute;left:5px;top:242.1px;opacity:0.88" width="9" height="9" viewBox="0 0 10 10"><path d="M1.8,1.4 H8.2 V3.2 H7.3 V2.5 H5.7 V7.9 H6.8 V8.8 H3.2 V7.9 H4.3 V2.5 H2.7 V3.2 H1.8 Z" fill="#f0f0f0"/></svg><svg style="position:absolute;left:5px;top:254.7px;opacity:0.88" width="9" height="9" viewBox="0 0 10 10"><path d="M2.2,0.8 L8.2,6.4 L5.6,6.5 L7,9.2 L5.8,9.7 L4.5,7 L2.2,8.8 Z" fill="#f0f0f0"/></svg><svg style="position:absolute;left:5px;top:267.1px;opacity:0.88" width="9" height="9" viewBox="0 0 10 10"><rect x="1" y="1.6" width="8" height="6.8" fill="#4a4a4a" stroke="#cfcfcf" stroke-width="0.9"/><rect x="3.2" y="3.6" width="3.6" height="2.8" fill="none" stroke="#9a9a9a" stroke-width="0.6"/></svg><svg style="position:absolute;left:5px;top:280.1px;opacity:0.88" width="9" height="9" viewBox="0 0 10 10"><path d="M3,9.2 C1.8,7.6 1.2,6.4 0.9,5.2 C1.4,4.6 2.2,5 2.6,5.8 L2.6,2 C2.6,1.2 3.7,1.2 3.8,2 L3.9,1.2 C4,0.4 5.1,0.4 5.2,1.2 L5.3,1.8 C5.4,1 6.5,1 6.6,1.8 L6.7,2.8 C6.8,2.1 7.9,2.1 7.9,2.9 L7.9,6.4 C7.9,7.6 7.4,8.4 6.8,9.2 Z" fill="#ececec"/></svg><svg style="position:absolute;left:5px;top:292.5px;opacity:0.88" width="9" height="9" viewBox="0 0 10 10"><circle cx="4" cy="4" r="2.7" fill="none" stroke="#e0e0e0" stroke-width="1.3"/><path d="M6,6 L9,9" stroke="#e8e8e8" stroke-width="1.6" stroke-linecap="round"/></svg><svg style="position:absolute;left:5px;top:304.5px;opacity:0.88" width="9" height="9" viewBox="0 0 10 10"><circle cx="1.6" cy="5" r="1" fill="#dcdcdc"/><circle cx="5" cy="5" r="1" fill="#dcdcdc"/><circle cx="8.4" cy="5" r="1" fill="#dcdcdc"/></svg><div style="position:absolute;left:4px;top:319.3px;width:2.6px;height:2.6px;background:#e8e8e8;"></div><div style="position:absolute;left:3px;top:318.3px;width:2.4px;height:2.4px;background:#111;border:0.4px solid #ccc;box-sizing:border-box;"></div><svg style="position:absolute;left:10px;top:317.5px" width="5.5" height="5.5" viewBox="0 0 6 6"><path d="M1,1.6 H3.4 C4.4,1.6 4.6,2.4 4.6,3.2 V5" fill="none" stroke="#d8d8d8" stroke-width="0.8"/><path d="M1.8,0.4 L0.4,1.6 L1.8,2.8 Z M3.4,4.2 L4.6,5.8 L5.8,4.2 Z" fill="#d8d8d8"/></svg><div style="position:absolute;left:7px;top:330.6px;width:9.2px;height:8.8px;background:#ffffff;border:0.6px solid #555;box-sizing:border-box;"></div><div style="position:absolute;left:2.4px;top:325.2px;width:8.6px;height:8.8px;background:#000000;border:0.7px solid #6a6a6a;box-sizing:border-box;"></div><svg style="position:absolute;left:5px;top:343.3px;opacity:0.88" width="9" height="9" viewBox="0 0 10 10"><rect x="0.8" y="1.4" width="8.4" height="7.2" fill="none" stroke="#a8a8a8" stroke-width="0.9"/><circle cx="5" cy="5" r="2" fill="none" stroke="#a8a8a8" stroke-width="0.8" stroke-dasharray="1 0.7"/></svg><svg style="position:absolute;left:5px;top:355.5px;opacity:0.88" width="9" height="9" viewBox="0 0 10 10"><path d="M1,3 L3,1.2 H9 V7 L7,8.8 H1 Z" fill="none" stroke="#c8c8c8" stroke-width="0.9"/><rect x="1" y="3" width="6" height="5.8" fill="#8a8a8a" stroke="#d0d0d0" stroke-width="0.7"/></svg><svg style="position:absolute;left:14.6px;top:62.6px" width="1.8" height="1.8" viewBox="0 0 2 2"><path d="M2,0 V2 H0 Z" fill="#8a8a8a"/></svg><svg style="position:absolute;left:14.6px;top:75px" width="1.8" height="1.8" viewBox="0 0 2 2"><path d="M2,0 V2 H0 Z" fill="#8a8a8a"/></svg><svg style="position:absolute;left:14.6px;top:87.6px" width="1.8" height="1.8" viewBox="0 0 2 2"><path d="M2,0 V2 H0 Z" fill="#8a8a8a"/></svg><svg style="position:absolute;left:14.6px;top:100px" width="1.8" height="1.8" viewBox="0 0 2 2"><path d="M2,0 V2 H0 Z" fill="#8a8a8a"/></svg><svg style="position:absolute;left:14.6px;top:113px" width="1.8" height="1.8" viewBox="0 0 2 2"><path d="M2,0 V2 H0 Z" fill="#8a8a8a"/></svg><svg style="position:absolute;left:14.6px;top:125.4px" width="1.8" height="1.8" viewBox="0 0 2 2"><path d="M2,0 V2 H0 Z" fill="#8a8a8a"/></svg><svg style="position:absolute;left:14.6px;top:138px" width="1.8" height="1.8" viewBox="0 0 2 2"><path d="M2,0 V2 H0 Z" fill="#8a8a8a"/></svg><svg style="position:absolute;left:14.6px;top:150.6px" width="1.8" height="1.8" viewBox="0 0 2 2"><path d="M2,0 V2 H0 Z" fill="#8a8a8a"/></svg><svg style="position:absolute;left:14.6px;top:163px" width="1.8" height="1.8" viewBox="0 0 2 2"><path d="M2,0 V2 H0 Z" fill="#8a8a8a"/></svg><svg style="position:absolute;left:14.6px;top:175.4px" width="1.8" height="1.8" viewBox="0 0 2 2"><path d="M2,0 V2 H0 Z" fill="#8a8a8a"/></svg><svg style="position:absolute;left:14.6px;top:188px" width="1.8" height="1.8" viewBox="0 0 2 2"><path d="M2,0 V2 H0 Z" fill="#8a8a8a"/></svg><svg style="position:absolute;left:14.6px;top:200.4px" width="1.8" height="1.8" viewBox="0 0 2 2"><path d="M2,0 V2 H0 Z" fill="#8a8a8a"/></svg><svg style="position:absolute;left:14.6px;top:213px" width="1.8" height="1.8" viewBox="0 0 2 2"><path d="M2,0 V2 H0 Z" fill="#8a8a8a"/></svg><svg style="position:absolute;left:14.6px;top:225.4px" width="1.8" height="1.8" viewBox="0 0 2 2"><path d="M2,0 V2 H0 Z" fill="#8a8a8a"/></svg><svg style="position:absolute;left:14.6px;top:237.6px" width="1.8" height="1.8" viewBox="0 0 2 2"><path d="M2,0 V2 H0 Z" fill="#8a8a8a"/></svg><svg style="position:absolute;left:14.6px;top:250px" width="1.8" height="1.8" viewBox="0 0 2 2"><path d="M2,0 V2 H0 Z" fill="#8a8a8a"/></svg><svg style="position:absolute;left:14.6px;top:262.6px" width="1.8" height="1.8" viewBox="0 0 2 2"><path d="M2,0 V2 H0 Z" fill="#8a8a8a"/></svg><svg style="position:absolute;left:14.6px;top:275px" width="1.8" height="1.8" viewBox="0 0 2 2"><path d="M2,0 V2 H0 Z" fill="#8a8a8a"/></svg><svg style="position:absolute;left:14.6px;top:288px" width="1.8" height="1.8" viewBox="0 0 2 2"><path d="M2,0 V2 H0 Z" fill="#8a8a8a"/></svg><svg style="position:absolute;left:14.6px;top:300.4px" width="1.8" height="1.8" viewBox="0 0 2 2"><path d="M2,0 V2 H0 Z" fill="#8a8a8a"/></svg><svg style="position:absolute;left:14.6px;top:312.4px" width="1.8" height="1.8" viewBox="0 0 2 2"><path d="M2,0 V2 H0 Z" fill="#8a8a8a"/></svg><svg style="position:absolute;left:14.6px;top:363.4px" width="1.8" height="1.8" viewBox="0 0 2 2"><path d="M2,0 V2 H0 Z" fill="#8a8a8a"/></svg><div style="position:absolute;left:553.5px;top:30.8px;width:6.5px;height:0.9px;background:#686868;"></div><svg style="position:absolute;left:550.3px;top:38.5px" width="10" height="10" viewBox="0 0 10 10"><path d="M8.6,1.4 L3.6,6.4" stroke="#ececec" stroke-width="1.4" stroke-linecap="round"/><path d="M3.2,6.4 C2.2,6.6 1.6,7.6 1.2,9 C2.6,8.8 3.6,8.2 3.9,7.1 Z" fill="#f4f4f4"/><path d="M1,1.4 H3.6 M1,1.4 V3.6" stroke="#bdbdbd" stroke-width="0.8" fill="none"/></svg><svg style="position:absolute;left:550.3px;top:50.5px" width="10" height="10" viewBox="0 0 10 10"><path d="M0.8,3 H9.2 M0.8,7 H9.2" stroke="#e8e8e8" stroke-width="1"/><rect x="2" y="1.5" width="2" height="3" fill="#f4f4f4"/><rect x="6" y="5.5" width="2" height="3" fill="#f4f4f4"/></svg><div style="position:absolute;left:549.5px;top:63.5px;width:10px;height:0.7px;background:#242424;"></div><svg style="position:absolute;left:550.3px;top:68px" width="10" height="10" viewBox="0 0 10 10"><path d="M2,1.2 L9,5 L2,8.8 Z" fill="#ececec"/></svg><div style="position:absolute;left:549.5px;top:81.5px;width:10px;height:0.7px;background:#242424;"></div><div style="position:absolute;left:551px;top:84.2px;font-size:8px;line-height:9.6px;color:#e4e4e4;white-space:nowrap;">A</div><div style="position:absolute;left:557.5px;top:85px;width:0.8px;height:8.5px;background:#dcdcdc;"></div><svg style="position:absolute;left:550.8px;top:101px" width="9" height="9" viewBox="0 0 10 10"><path d="M5.6,1 C8,1 9.2,2.8 8.6,4.8 C8.2,6.4 6.6,6.8 5.4,6.6 L5,9 L3.2,8.8 L3.4,6.2 C2,5.4 1.8,3.6 2.8,2.2 C3.4,1.4 4.4,1 5.6,1 Z" fill="#e4e4e4"/></svg><div style="position:absolute;left:568px;top:37.6px;line-height:0;color:#d8d8d8;"><span class="t" style="font-size:5.6px;line-height:5.6px;">属性</span></div><svg style="position:absolute;left:568.25px;top:49.25px" width="8.5" height="8.5" viewBox="0 0 10 10"><rect x="0.8" y="1.6" width="8.4" height="6.8" fill="none" stroke="#d0d0d0" stroke-width="0.9"/><path d="M1.2,7.8 L3.8,4.8 L5.6,6.6 L6.8,5.6 L8.8,7.8 Z" fill="#d0d0d0"/><circle cx="6.8" cy="3.6" r="0.8" fill="#d0d0d0"/></svg><div style="position:absolute;left:581px;top:49.8px;width:9.5px;height:7.6px;background:#f2f2f2;border-radius:0.8px;"></div><div style="position:absolute;left:583.6px;top:51.4px;width:4.4px;height:4.4px;border-radius:50%;background:#1a1a1a"></div><div style="position:absolute;left:593px;top:51px;line-height:0;color:#a8a8a8;"><span class="t" style="font-size:5.4px;line-height:5.4px;">蒙版</span></div><div style="position:absolute;left:566.3px;top:64.8px;width:13px;height:13.2px;background:#f0f0f0;"></div><svg style="position:absolute;left:566.3px;top:64.8px" width="13" height="13.2" viewBox="0 0 13 13.2"><rect x="3.2" y="2.4" width="5.6" height="8" rx="0.8" fill="none" stroke="#3a3a3a" stroke-width="1.3" transform="rotate(-42 6.5 6.6)"/><path d="M1,9.5 L4,12.5 M8.8,1 L12,4" stroke="#6a6a6a" stroke-width="0.9"/></svg><div style="position:absolute;left:583px;top:68.6px;line-height:0;color:#9c9c9c;transform:skewX(-12deg);"><span class="t" style="font-size:5.4px;line-height:5.4px;">未选择蒙版</span></div><div style="position:absolute;left:656.3px;top:68.2px;width:7px;height:6px;background:#e6e6e6;border-radius:0.6px;"></div><div style="position:absolute;left:658.4px;top:69.8px;width:2.8px;height:2.8px;border-radius:50%;background:#222"></div><svg style="position:absolute;left:666px;top:67.2px" width="8" height="8" viewBox="0 0 10 10"><rect x="1.4" y="1.4" width="7.2" height="7.2" fill="none" stroke="#bdbdbd" stroke-width="1" stroke-dasharray="1.6 1"/><rect x="5.6" y="5.6" width="3.6" height="3.6" fill="#d8d8d8"/></svg><div style="position:absolute;left:569px;top:94px;line-height:0;color:#5e5e5e;"><span class="t" style="font-size:5.4px;line-height:5.4px;">浓度:</span></div><div style="position:absolute;left:649px;top:93.3px;width:23px;height:6.6px;background:#2a2a2a;border-radius:1px;"></div><div style="position:absolute;left:568px;top:103.2px;width:104.5px;height:1px;background:#454545;"></div><div style="position:absolute;left:569px;top:118.6px;line-height:0;color:#5e5e5e;"><span class="t" style="font-size:5.4px;line-height:5.4px;">羽化:</span></div><div style="position:absolute;left:649px;top:118px;width:23px;height:6.6px;background:#2a2a2a;border-radius:1px;"></div><div style="position:absolute;left:568px;top:127.6px;width:104.5px;height:1px;background:#454545;"></div><div style="position:absolute;left:568px;top:134.5px;width:3px;height:0.7px;background:#4a4a4a;"></div><div style="position:absolute;left:568.5px;top:141.6px;line-height:0;color:#5e5e5e;"><span class="t" style="font-size:5.4px;line-height:5.4px;">调整:</span></div><div style="position:absolute;left:624px;top:142px;width:48.3px;height:8.4px;background:#2a2a2a;border-radius:1.2px;"></div><div style="position:absolute;left:633.15px;top:143.5px;line-height:0;color:#595959;"><span class="t" style="font-size:5.2px;line-height:5.2px;">选择并遮住...</span></div><div style="position:absolute;left:624px;top:157px;width:48.3px;height:8.4px;background:#2a2a2a;border-radius:1.2px;"></div><div style="position:absolute;left:635.75px;top:158.5px;line-height:0;color:#595959;"><span class="t" style="font-size:5.2px;line-height:5.2px;">颜色范围...</span></div><div style="position:absolute;left:624px;top:171.4px;width:48.3px;height:8.4px;background:#2a2a2a;border-radius:1.2px;"></div><div style="position:absolute;left:642.95px;top:172.9px;line-height:0;color:#595959;"><span class="t" style="font-size:5.2px;line-height:5.2px;">反相</span></div><svg style="position:absolute;left:621.25px;top:422.75px" width="7.5" height="7.5" viewBox="0 0 10 10"><rect x="1.5" y="1.5" width="7" height="7" fill="none" stroke="#5a5a5a" stroke-width="0.9" stroke-dasharray="1.5 1"/></svg><svg style="position:absolute;left:635.25px;top:422.75px" width="7.5" height="7.5" viewBox="0 0 10 10"><path d="M5,1 L9,5 L5,9 L1,5 Z" fill="#666"/></svg><svg style="position:absolute;left:648.75px;top:422.75px" width="7.5" height="7.5" viewBox="0 0 10 10"><path d="M0.8,5 C2.6,2 7.4,2 9.2,5 C7.4,8 2.6,8 0.8,5 Z" fill="#6a6a6a"/><circle cx="5" cy="5" r="1.4" fill="#333"/></svg><svg style="position:absolute;left:662.25px;top:422.75px" width="7.5" height="7.5" viewBox="0 0 10 10"><path d="M2,2.4 H8 M2.8,2.4 L3.2,9 H6.8 L7.2,2.4 M4,1.2 H6" fill="none" stroke="#5a5a5a" stroke-width="1"/></svg><div style="position:absolute;left:686px;top:30px;width:114px;height:15.5px;background:#282828;"></div><div style="position:absolute;left:687px;top:36.5px;width:15px;height:9px;background:#333333;"></div><div style="position:absolute;left:689.5px;top:38.2px;line-height:0;color:#d0d0d0;"><span class="t" style="font-size:5.6px;line-height:5.6px;">图层</span></div><div style="position:absolute;left:707px;top:38.2px;line-height:0;color:#8a8a8a;"><span class="t" style="font-size:5.6px;line-height:5.6px;">通道</span></div><div style="position:absolute;left:724px;top:38.2px;line-height:0;color:#8a8a8a;"><span class="t" style="font-size:5.6px;line-height:5.6px;">路径</span></div><div style="position:absolute;left:688.5px;top:48.6px;width:39px;height:9.6px;background:#292929;border-radius:1.2px;"></div><svg style="position:absolute;left:689.55px;top:50.65px" width="5.5" height="5.5" viewBox="0 0 10 10"><circle cx="4" cy="4" r="2.6" fill="none" stroke="#bdbdbd" stroke-width="1.3"/><path d="M6,6 L9,9" stroke="#bdbdbd" stroke-width="1.4"/></svg><div style="position:absolute;left:696px;top:50.7px;line-height:0;color:#c0c0c0;"><span class="t" style="font-size:5.4px;line-height:5.4px;">类型</span></div><svg style="position:absolute;left:721px;top:52.2px" width="4" height="3" viewBox="0 0 4 3"><path fill="none" stroke="#8a8a8a" stroke-width="0.8" d="M0.3,0.5 L2,2.3 L3.7,0.5"/></svg><svg style="position:absolute;left:736.25px;top:49.65px" width="7.5" height="7.5" viewBox="0 0 10 10"><rect x="0.8" y="1.6" width="8.4" height="6.8" fill="none" stroke="#c4c4c4" stroke-width="1"/><path d="M1.2,7.8 L3.8,4.8 L5.6,6.6 L6.8,5.6 L8.8,7.8 Z" fill="#c4c4c4"/></svg><svg style="position:absolute;left:746.75px;top:49.65px" width="7.5" height="7.5" viewBox="0 0 10 10"><circle cx="5" cy="5" r="3.7" fill="none" stroke="#d0d0d0" stroke-width="1"/><path d="M5,1.3 A3.7,3.7 0 0 1 5,8.7 Z" fill="#d0d0d0"/></svg><svg style="position:absolute;left:757.25px;top:49.65px" width="7.5" height="7.5" viewBox="0 0 10 10"><path d="M1.6,1.6 H8.4 V3.4 H7.5 V2.7 H5.7 V7.7 H6.8 V8.6 H3.2 V7.7 H4.3 V2.7 H2.5 V3.4 H1.6 Z" fill="#d0d0d0"/></svg><svg style="position:absolute;left:767.25px;top:49.65px" width="7.5" height="7.5" viewBox="0 0 10 10"><rect x="2" y="2" width="6" height="6" fill="none" stroke="#d0d0d0" stroke-width="1"/><rect x="0.8" y="0.8" width="2.2" height="2.2" fill="#d0d0d0"/><rect x="7" y="0.8" width="2.2" height="2.2" fill="#d0d0d0"/><rect x="0.8" y="7" width="2.2" height="2.2" fill="#d0d0d0"/><rect x="7" y="7" width="2.2" height="2.2" fill="#d0d0d0"/></svg><svg style="position:absolute;left:777.75px;top:49.65px" width="7.5" height="7.5" viewBox="0 0 10 10"><rect x="1.2" y="1.2" width="5.6" height="6.6" fill="#d8d8d8"/><path d="M4.6,9 L8.8,9 L8.8,4 L7,4 L7,8 L4.6,8 Z" fill="#8a8a8a"/></svg><div style="position:absolute;left:794.6px;top:51.6px;width:3.4px;height:3.4px;border-radius:50%;background:#e4e4e4"></div><div style="position:absolute;left:688.5px;top:61.6px;width:57px;height:9.4px;background:#292929;border-radius:1.2px;"></div><div style="position:absolute;left:690.5px;top:63.6px;line-height:0;color:#c0c0c0;"><span class="t" style="font-size:5.4px;line-height:5.4px;">正常</span></div><svg style="position:absolute;left:739px;top:65.2px" width="4" height="3" viewBox="0 0 4 3"><path fill="none" stroke="#8a8a8a" stroke-width="0.8" d="M0.3,0.5 L2,2.3 L3.7,0.5"/></svg><div style="position:absolute;left:748.5px;top:63.6px;line-height:0;color:#8e8e8e;"><span class="t" style="font-size:5.2px;line-height:5.2px;">不透明度:</span></div><div style="position:absolute;left:772px;top:61.6px;width:26.5px;height:9.4px;background:#292929;border-radius:1.2px;"></div><div style="position:absolute;left:773.5px;top:63.2px;font-size:5.4px;line-height:6.48px;color:#c4c4c4;white-space:nowrap;">100%</div><svg style="position:absolute;left:792.5px;top:65.2px" width="4" height="3" viewBox="0 0 4 3"><path fill="none" stroke="#8a8a8a" stroke-width="0.8" d="M0.3,0.5 L2,2.3 L3.7,0.5"/></svg><div style="position:absolute;left:689.5px;top:76px;line-height:0;color:#8a8a8a;"><span class="t" style="font-size:5.2px;line-height:5.2px;">锁定:</span></div><svg style="position:absolute;left:703.55px;top:74.85px" width="7.5" height="7.5" viewBox="0 0 10 10"><rect x="1" y="1" width="8" height="8" fill="none" stroke="#d0d0d0" stroke-width="0.9"/><path d="M1,1 H5 V5 H1 Z M5,5 H9 V9 H5 Z" fill="#bdbdbd" opacity="0.8"/><circle cx="5" cy="5" r="1.6" fill="#e4e4e4"/></svg><svg style="position:absolute;left:712.45px;top:74.85px" width="7.5" height="7.5" viewBox="0 0 10 10"><path d="M8.6,1.2 L3.6,6.2" stroke="#e6e6e6" stroke-width="1.4" stroke-linecap="round"/><path d="M3.2,6.2 C2.2,6.4 1.6,7.4 1.2,8.8 C2.6,8.6 3.6,8 3.9,6.9 Z" fill="#f4f4f4"/></svg><svg style="position:absolute;left:721.45px;top:74.85px" width="7.5" height="7.5" viewBox="0 0 10 10"><path fill="#dcdcdc" d="M5,0.6 L6.6,2.6 L5.5,2.6 L5.5,4.5 L7.4,4.5 L7.4,3.4 L9.4,5 L7.4,6.6 L7.4,5.5 L5.5,5.5 L5.5,7.4 L6.6,7.4 L5,9.4 L3.4,7.4 L4.5,7.4 L4.5,5.5 L2.6,5.5 L2.6,6.6 L0.6,5 L2.6,3.4 L2.6,4.5 L4.5,4.5 L4.5,2.6 L3.4,2.6 Z"/></svg><svg style="position:absolute;left:730.45px;top:74.85px" width="7.5" height="7.5" viewBox="0 0 10 10"><path d="M2.6,0.8 V7.4 H9.2 M0.8,2.6 H7.4 V9.2" fill="none" stroke="#d8d8d8" stroke-width="1.2"/><rect x="4" y="4" width="2.2" height="2.2" fill="#d8d8d8"/></svg><svg style="position:absolute;left:739.65px;top:74.85px" width="7.5" height="7.5" viewBox="0 0 10 10"><rect x="1.6" y="4.4" width="6.8" height="4.8" rx="0.6" fill="#e8e8e8"/><path d="M3,4.6 V3 A2,2 0 0 1 7,3 V4.6" fill="none" stroke="#e8e8e8" stroke-width="1.1"/></svg><div style="position:absolute;left:757px;top:76px;line-height:0;color:#8e8e8e;"><span class="t" style="font-size:5.2px;line-height:5.2px;">填充:</span></div><div style="position:absolute;left:772px;top:73.8px;width:26.5px;height:9.4px;background:#292929;border-radius:1.2px;"></div><div style="position:absolute;left:773.5px;top:75.4px;font-size:5.4px;line-height:6.48px;color:#c4c4c4;white-space:nowrap;">100%</div><svg style="position:absolute;left:792.5px;top:77.4px" width="4" height="3" viewBox="0 0 4 3"><path fill="none" stroke="#8a8a8a" stroke-width="0.8" d="M0.3,0.5 L2,2.3 L3.7,0.5"/></svg><div style="position:absolute;left:687px;top:84.8px;width:105.5px;height:0.7px;background:#262626;"></div><div style="position:absolute;left:696.5px;top:85.5px;width:96px;height:17.6px;background:#4a4a4a;"></div><div style="position:absolute;left:792.5px;top:85.4px;width:7.5px;height:335px;background:#2b2b2b;"></div><div style="position:absolute;left:687px;top:103.1px;width:105.5px;height:0.7px;background:#262626;"></div><svg style="position:absolute;left:687.95px;top:91.55px" width="6.5" height="6.5" viewBox="0 0 10 10"><path d="M0.6,5 C2.4,2 7.6,2 9.4,5 C7.6,8 2.4,8 0.6,5 Z" fill="#d8d8d8"/><circle cx="5" cy="5" r="1.6" fill="#2a2a2a"/></svg><div style="position:absolute;left:697.4px;top:87px;width:15.8px;height:15.8px;background:#eeeeee;border:0.6px solid #fff;box-sizing:border-box;"></div><svg style="position:absolute;left:697.4px;top:87px" width="15.8" height="15.8" viewBox="0 0 16 16"><rect x="4" y="3" width="7" height="10" rx="1" fill="none" stroke="#3a3a3a" stroke-width="1.6" transform="rotate(-42 8 8)"/><path d="M1,11.5 L4.5,15 M11,1 L15,5" stroke="#777" stroke-width="1"/><rect x="10.5" y="10.5" width="5" height="5" fill="#fff" stroke="#444" stroke-width="0.6"/></svg><svg style="position:absolute;left:713.35px;top:92.55px" width="4.5" height="4.5" viewBox="0 0 10 10"><path d="M3,2 V8 M7,2 V8 M3,3.4 H7 M3,6.6 H7" stroke="#aaa" stroke-width="0.9" fill="none"/></svg><div style="position:absolute;left:718.2px;top:87px;width:15.4px;height:15.8px;background:#050505;border:0.5px solid #777;box-sizing:border-box;"></div><svg style="position:absolute;left:718.2px;top:87px" width="15.4" height="15.8" viewBox="0 0 16 16"><path d="M2.5,7.2 L4,5.4 L7,5 L8,3.4 L9.4,5.2 L12,6.4 L14.4,8.6 L13.8,11 L11,11.6 L9.4,13 L8,11.6 L5,10.6 L3,8.8 Z" fill="#f6f6f6"/></svg><div style="position:absolute;left:736.5px;top:91.9px;line-height:0;color:#e4e4e4;"><span class="t" style="font-size:5.6px;line-height:5.6px;">图层 1</span></div><svg style="position:absolute;left:688.5px;top:422.5px" width="8" height="8" viewBox="0 0 10 10"><path d="M3.6,3.6 H2.6 A1.6,1.6 0 0 0 2.6,6.8 H3.6 M6.4,3.6 H7.4 A1.6,1.6 0 0 1 7.4,6.8 H6.4 M3.4,5.2 H6.6" fill="none" stroke="#5a5a5a" stroke-width="0.9"/></svg><div style="position:absolute;left:703.6px;top:422.6px;font-size:6.6px;line-height:7.92px;color:#d8d8d8;white-space:nowrap;font-style:italic;font-weight:bold;">fx</div><div style="position:absolute;left:718.2px;top:423.2px;width:8px;height:6.4px;background:#ececec;border-radius:0.6px;"></div><div style="position:absolute;left:720.6px;top:424.8px;width:3.2px;height:3.2px;border-radius:50%;background:#222"></div><svg style="position:absolute;left:734px;top:422.5px" width="8" height="8" viewBox="0 0 10 10"><circle cx="5" cy="5" r="3.8" fill="none" stroke="#e4e4e4" stroke-width="1"/><path d="M1.6,6.4 A3.8,3.8 0 0 0 8.6,3.4 Z" fill="#e4e4e4"/></svg><svg style="position:absolute;left:748.5px;top:422.5px" width="8" height="8" viewBox="0 0 10 10"><path d="M0.8,2 H4 L5,3.2 H9.2 V8.4 H0.8 Z" fill="#e8e8e8"/></svg><svg style="position:absolute;left:763px;top:422.5px" width="8" height="8" viewBox="0 0 10 10"><path d="M1.4,1.4 H8.6 V8.6 H4.4 L1.4,5.8 Z" fill="none" stroke="#cfcfcf" stroke-width="1"/><path d="M1.4,5.8 H4.4 V8.6" fill="#cfcfcf"/></svg><svg style="position:absolute;left:778px;top:422.5px" width="8" height="8" viewBox="0 0 10 10"><path d="M2,2.4 H8 M2.8,2.4 L3.2,9 H6.8 L7.2,2.4 M4,1.2 H6" fill="none" stroke="#6a6a6a" stroke-width="1"/></svg><svg style="position:absolute;left:734.5px;top:429px" width="7" height="6" viewBox="0 0 7 6"><path d="M3.5,0 L6.6,4.6 L4.4,4.2 L3.5,6 L2.6,4.2 L0.4,4.6 Z" fill="#f0f0f0"/></svg><div style="position:absolute;left:759px;top:4.6px;width:5px;height:0.8px;background:#5c5c5c;"></div><div style="position:absolute;left:770.5px;top:2.4px;width:5px;height:4.4px;background:transparent;border:0.8px solid #5a5a5a;box-sizing:border-box;"></div><svg style="position:absolute;left:784.5px;top:2.2px" width="5" height="5" viewBox="0 0 5 5"><path d="M0.5,0.5 L4.5,4.5 M4.5,0.5 L0.5,4.5" stroke="#6e6e6e" stroke-width="0.8"/></svg><div style="position:absolute;left:641.4px;top:23.3px;font-size:15.7px;line-height:18px;font-weight:bold;color:#d3d3d3;letter-spacing:0.5px;white-space:nowrap;">DailyPixel</div><svg style="position:absolute;left:720px;top:10px" width="75" height="42" viewBox="0 0 796 446"><g fill="none" stroke="#9a9a9a" stroke-width="9"><circle cx="570" cy="105" r="20"/><rect x="695" y="78" width="68" height="62"/><path d="M695,100 H763 M728,78 V100"/></g><g fill="#ebebeb" filter="url(#lgb)"><defs><filter id="lgb"><feGaussianBlur stdDeviation="3"/></filter></defs><path d="M80,66 L128,60 L147,215 L240,252 L236,302 L150,318 L108,320 Z M166,250 L166,292 L203,271 Z" fill-rule="evenodd"/><path d="M249,190 L272,188 L286,300 L258,303 Z"/><path d="M252,140 L260,140 L262,150 L268,150 L268,138 L276,138 L278,172 L254,174 Z"/><path d="M299,96 L326,92 L346,298 L318,302 Z"/><path d="M354,190 L378,188 L386,304 L358,306 Z"/><path d="M356,142 L364,142 L365,152 L371,152 L371,140 L379,140 L380,174 L357,176 Z"/><path d="M394,70 L441,62 L460,222 L547,258 L542,306 L462,322 L422,324 Z M476,255 L476,297 L512,276 Z" fill-rule="evenodd"/><path d="M559,196 L583,194 L591,300 L565,303 Z"/><path d="M560,146 L568,146 L569,156 L575,156 L575,144 L583,144 L584,178 L561,180 Z"/><path d="M604,100 L631,95 L651,298 L625,302 Z"/><path d="M664,196 L689,194 L696,304 L666,306 Z"/><path d="M664,148 L672,148 L673,158 L679,158 L679,146 L687,146 L688,180 L665,182 Z"/></g></svg><div style="position:absolute;left:100px;top:94px;width:364px;height:285px;background-color:#fff;background-image:conic-gradient(#cbcbcb 25%,#fff 0 50%,#cbcbcb 0 75%,#fff 0);background-size:6.56px 6.56px;"></div><svg style="position:absolute;left:100px;top:94px" width="364" height="285" viewBox="100 94 364 285"><defs><filter id="bl" x="-5%" y="-5%" width="110%" height="110%"><feGaussianBlur stdDeviation="0.6"/></filter><filter id="bl2" x="-20%" y="-20%" width="140%" height="140%"><feGaussianBlur stdDeviation="3"/></filter><filter id="bl3" x="-20%" y="-20%" width="140%" height="140%"><feGaussianBlur stdDeviation="1.2"/></filter><filter id="fur" x="0" y="0" width="100%" height="100%"><feTurbulence type="fractalNoise" baseFrequency="0.35 0.5" numOctaves="2" seed="7" result="n"/><feColorMatrix in="n" type="matrix" values="0 0 0 0 0  0 0 0 0 0  0 0 0 0 0  1.6 0 0 0 -0.62"/><feGaussianBlur stdDeviation="0.5"/></filter><filter id="fur2" x="0" y="0" width="100%" height="100%"><feTurbulence type="fractalNoise" baseFrequency="0.4 0.55" numOctaves="2" seed="23" result="n"/><feColorMatrix in="n" type="matrix" values="0 0 0 0 1  0 0 0 0 0.8  0 0 0 0 0.65  1.5 0 0 0 -0.7"/><feGaussianBlur stdDeviation="0.5"/></filter><linearGradient id="bodyg" x1="0" y1="0" x2="0" y2="1"><stop offset="0" stop-color="#3e281d"/><stop offset="0.45" stop-color="#482d20"/><stop offset="1" stop-color="#442a1d"/></linearGradient><clipPath id="bodyclip"><path d="M104,210 L106,204.5 L115,203 L130,201.5 L145,199.5 L160,196.5 L175,194 L185,196.5 L191,200.5 L199,200.5 L207,196.5 L218,190.5 L227,188 L226.5,194 L221,204 L214,210 L207,224 L228,232 L246,238.5 L251,236.5 L262,230 L282,222.5 L305,216.5 L328,211 L350,209 L378,209 L396,214 L419,224.5 L442,233.5 L456,241.5 L460.5,253 L458,271 L451,276 L459,289 L458,307 L450,308 L442,305 L431,314.5 L428,323.5 L405,328 L373,329.5 L357,328 L340,330 L320,334 L298,338 L275,338 L252,332 L241,324 L232,318.7 L205,309.6 L182,296 L166,277.6 L159,257 L141,238.7 L122.6,227.3 L113.7,222.6 L107,215.7 Z"/></clipPath></defs><g filter="url(#bl)"><g fill="#1b1513" stroke="none"><path d="M207,214 L215,208.5 L232,205.5 L246,197 L256.8,186 L252.5,197 L241,210 L244,213 L254,207 L264.2,200.2 L257.5,209.5 L245,219 L243,225 L249.5,233.5 L245,235 L230,228.5 L207,223 Z"/></g><path fill="url(#bodyg)" d="M104,210 L106,204.5 L115,203 L130,201.5 L145,199.5 L160,196.5 L175,194 L185,196.5 L191,200.5 L199,200.5 L207,196.5 L218,190.5 L227,188 L226.5,194 L221,204 L214,210 L207,224 L228,232 L246,238.5 L251,236.5 L262,230 L282,222.5 L305,216.5 L328,211 L350,209 L378,209 L396,214 L419,224.5 L442,233.5 L456,241.5 L460.5,253 L458,271 L451,276 L459,289 L458,307 L450,308 L442,305 L431,314.5 L428,323.5 L405,328 L373,329.5 L357,328 L340,330 L320,334 L298,338 L275,338 L252,332 L241,324 L232,318.7 L205,309.6 L182,296 L166,277.6 L159,257 L141,238.7 L122.6,227.3 L113.7,222.6 L107,215.7 Z"/><g clip-path="url(#bodyclip)"><path filter="url(#bl2)" fill="#2a1912" opacity="0.92" d="M175,215 L215,222 L250,240 L262,262 L258,300 L240,325 L200,312 L170,285 L160,250 Z"/><path filter="url(#bl3)" fill="#2e1e16" opacity="0.8" d="M104,205 L130,200 L165,195 L190,196 L185,206 L150,210 L120,212 L104,212 Z"/><path filter="url(#bl3)" fill="#b49674" opacity="0.9" d="M107,214 L114,212 L128,217 L131,222 L120,224 L111,220 Z"/><path filter="url(#bl2)" fill="#5d4330" opacity="0.8" d="M130,212 L165,205 L185,215 L175,240 L150,238 L135,228 Z"/><path filter="url(#bl3)" fill="#221813" opacity="0.85" d="M146,199 L165,195 L180,194 L188,199 L184,208 L170,212 L152,211 L144,206 Z"/><ellipse cx="163.5" cy="201.5" rx="2.6" ry="1.7" fill="#0e0a08"/><path filter="url(#bl3)" fill="#1c1410" opacity="0.9" d="M104,205 L112,203.5 L114,208 L110,213 L104,212 Z"/><path filter="url(#bl3)" fill="#6a4a35" opacity="0.9" d="M196,201 L212,194 L226,189.5 L224,196 L216,205 L204,210 Z"/><path filter="url(#bl2)" fill="#150d0a" opacity="0.9" d="M352,318 L380,309 L420,305 L440,296 L464,280 L464,312 L436,322 L430,332 L400,334 L356,334 Z"/><path filter="url(#bl2)" fill="#24150f" opacity="0.7" d="M440,235 L462,245 L462,300 L445,300 L438,270 Z"/><path filter="url(#bl2)" fill="#5a3926" opacity="0.5" d="M290,232 L340,220 L390,222 L430,240 L430,262 L380,275 L320,280 L285,265 Z"/><path filter="url(#bl2)" fill="#573826" opacity="0.45" d="M240,300 L300,295 L340,305 L330,328 L280,334 L245,322 Z"/><rect x="100" y="180" width="364" height="200" filter="url(#fur)" opacity="0.55"/><rect x="100" y="180" width="364" height="200" filter="url(#fur2)" opacity="0.16"/></g><path fill="#3c2418" d="M299,336 L322,332 L320,343 L320,355 L333,357.5 L348,359.5 L356,366 L362,372.6 L345,371 L320,368.8 L311,366 L304.5,360 L301.5,350 Z"/><path fill="#44291b" d="M323,333 L340,328 L357,326 L362,340 L368,352 L371,362 L368,369 L362,372.6 L356,366 L348,359.5 L336,347 Z"/><path fill="#120c0a" d="M366,340 L370,342 L373.5,350 L372,355 L368,352 Z"/><path fill="#120c0a" d="M340,348 L344,352 L346,357 L342,355 Z"/><g fill="#f4f2f0"><ellipse cx="450" cy="255.5" rx="3.6" ry="3.4" filter="url(#bl3)"/><path filter="url(#bl3)" d="M400,311 L408,308 L414,306.5 L419,310 L424,316 L418,318 L412,314 L406,317 L403,321 L401,316 Z"/><ellipse cx="452" cy="298.5" rx="2.2" ry="2.6" fill="#d8d0b8" filter="url(#bl3)"/></g><g fill="#e8e0da" opacity="0.85"><circle cx="312.4" cy="222.1" r="0.7"/><circle cx="354.5" cy="215.2" r="0.5"/><circle cx="286.5" cy="229.4" r="0.7"/><circle cx="311.9" cy="225.5" r="0.8"/><circle cx="381.2" cy="215.3" r="0.9"/><circle cx="302.3" cy="224.7" r="1.0"/><circle cx="345.2" cy="217.0" r="0.9"/><circle cx="292.4" cy="227.6" r="0.9"/><circle cx="319.6" cy="216.8" r="1.0"/><circle cx="339.4" cy="218.0" r="1.0"/><circle cx="367.1" cy="217.4" r="0.7"/><circle cx="377.1" cy="213.8" r="1.1"/><circle cx="386.1" cy="214.3" r="0.6"/><circle cx="310.0" cy="225.7" r="0.8"/><circle cx="357.1" cy="212.8" r="0.8"/><circle cx="329.4" cy="217.2" r="0.9"/><circle cx="352.2" cy="217.3" r="0.9"/><circle cx="391.8" cy="222.2" r="1.1"/><circle cx="362.2" cy="211.7" r="1.0"/><circle cx="395.9" cy="224.1" r="0.8"/><circle cx="367.1" cy="212.1" r="1.0"/><circle cx="351.0" cy="212.6" r="0.5"/><circle cx="383.2" cy="219.9" r="0.6"/><circle cx="377.1" cy="213.6" r="0.6"/><circle cx="318.8" cy="222.5" r="1.0"/><circle cx="290.1" cy="227.0" r="0.5"/><circle cx="128" cy="203.5" r="1.2"/><circle cx="134" cy="205" r="0.8"/><circle cx="141" cy="203" r="0.9"/><circle cx="123" cy="206" r="0.7"/><circle cx="199" cy="219" r="1.6"/><circle cx="203" cy="222" r="1.2"/><circle cx="196" cy="223" r="0.9"/><circle cx="206" cy="217" r="0.9"/><circle cx="182" cy="236" r="1"/><circle cx="181" cy="241" r="0.9"/><circle cx="289" cy="223" r="1.8"/><circle cx="206" cy="214" r="0.8"/></g><ellipse cx="375.3" cy="205.8" rx="2.4" ry="1.7" fill="#15120f"/><ellipse cx="252" cy="333" rx="2" ry="1.2" fill="#8a8a3a" opacity="0.8"/><g fill="none" stroke="#1c1614" stroke-linecap="round" stroke-linejoin="round"><path stroke-width="9" d="M180,189 C192,189.5 206,187.5 222,182.5 C236,177.5 250,167.5 265,156.5 C273,150.5 280,144.5 286,138"/><path stroke-width="11" d="M270,153 L286,139"/><path stroke-width="6" d="M172,193 L186,190"/></g><path fill="#1c1614" d="M272,146 L279,133 L286,127 L293,127 L296,135 L297,144 L288,150 L276,156 Z"/><g fill="#1c1614"><path d="M128.6,175.8 C133,181.5 140,186.5 148,190 L166,194 L160,200 L145,197.6 C136,194 129.3,185 128.6,175.8 Z"/><path d="M164.7,135.2 C161.5,146 162.5,157 166.5,166 C171,176 178,183 186,187 L176,193 C168,187 162,177 159.3,167 C157,157 159.5,145 164.7,135.2 Z"/><path d="M194.9,143.8 C193,155 193.5,170 196,187 L188.3,188 C186.8,172 188,156 194.9,143.8 Z"/><path d="M244.4,116.9 C238.5,127 236.5,140 236.5,152 C236.5,160 238,166 241,171 L229,178 C227.5,168 228.8,155 229.8,145 C231.3,133 236.5,123 244.4,116.9 Z"/><path d="M303.6,99 C298.5,108 295,117 294,126 C293.5,131 294,136 295,140 L284.5,141 C285,133 286.3,124 290.3,115 C293.5,108 298,103 303.6,99 Z"/><path d="M289,135 C294,138.5 302,141 311,142.8 C317,144 322,144 327,143.6 L325,150.6 C317,151.2 308,150.3 300,148 C294,146 289,143.5 284,142 Z"/></g><path fill="#66625e" d="M273,111 C278,114.5 283,120 287.5,126.5 L280,131.5 C278,124 276,117 273,111 Z"/><path fill="#a09a94" d="M320,144.2 L327,143.4 L331.9,146.6 L328,150.2 L321,150.8 Z"/><path fill="#4a3c34" opacity="0.7" d="M300,142 L318,144.6 L318,149.6 L300,147 Z"/><path fill="#8a8682" opacity="0.8" d="M282,130 L287,126.5 L290,131 L285,136 Z"/></g></svg><div style="position:absolute;left:256px;top:381px;width:279px;height:35px;background:#fff;border-radius:3px;overflow:hidden;box-shadow:2px 3px 5px 1px rgba(0,0,0,0.6);"><div style="position:absolute;left:0px;top:0px;width:22.5px;height:35px;background:#18a0fb;"></div></div><div style="position:absolute;left:321px;top:389px;color:#333;line-height:0"><span class="t" style="font-size:18.7px;line-height:18.7px;">再次调整毛发细节</span></div></div></div></body></html>
